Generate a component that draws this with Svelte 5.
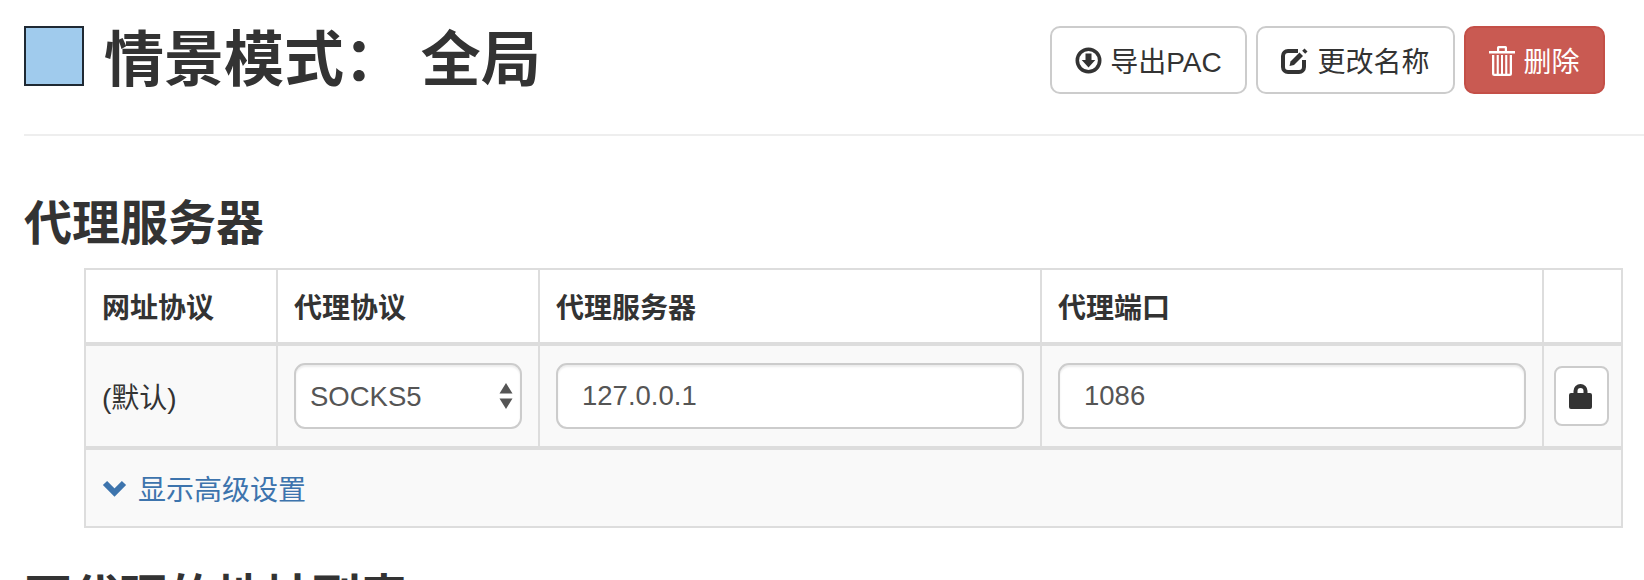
<script lang="ts">
  let protocol = 'SOCKS5';
  let host = '127.0.0.1';
  let port = '1086';
</script>

<div class="page">
  <header class="page-header">
    <span class="swatch"></span>
    <h1>情景模式： 全局</h1>
    <div class="actions">
      <button class="btn btn-export">
        <svg width="27" height="27" viewBox="0 0 27 27" aria-hidden="true">
          <circle cx="13.5" cy="13.5" r="11.2" fill="none" stroke="currentColor" stroke-width="3.6"/>
          <path d="M10.5 6.5h6v6.5h3.8l-6.800 7.500-6.800-7.500h3.800z" fill="currentColor"/>
        </svg>
        导出PAC
      </button>
      <button class="btn btn-rename">
        <svg width="28" height="27" viewBox="0 0 28 27" aria-hidden="true">
          <path d="M17 4H7a5 5 0 0 0-5 5v11a5 5 0 0 0 5 5h11a5 5 0 0 0 5-5v-7" fill="none" stroke="currentColor" stroke-width="4"/>
          <path d="M9.500 14.500l9-9 3.500 3.500-9 9-4.500 1z" fill="currentColor"/>
          <path d="M23.500 1.500l3 3-2.300 2.300-3-3z" fill="currentColor"/>
        </svg>
        更改名称
      </button>
      <button class="btn btn-delete">
        <svg width="26" height="31" viewBox="0 0 26 31" aria-hidden="true">
          <path d="M0 6h26v2.400H0zM8 6V2.500A1.500 1.500 0 0 1 9.500 1h7A1.500 1.500 0 0 1 18 2.500V6h-2.200V3.200H10.200V6z" fill="currentColor"/>
          <path d="M3 10h20v18.500a2.500 2.500 0 0 1-2.500 2.500h-15A2.500 2.500 0 0 1 3 28.500zM5.300 10v18.800h2.400V10zM9.800 10v18.800h2.200V10zM14 10v18.800h2.200V10zM18.300 10v18.800h2.400V10z" fill="currentColor" fill-rule="evenodd"/>
        </svg>
        删除
      </button>
    </div>
  </header>

  <h2>代理服务器</h2>

  <table class="servers">
    <colgroup>
      <col class="c-scheme" />
      <col class="c-protocol" />
      <col class="c-host" />
      <col class="c-port" />
      <col class="c-lock" />
    </colgroup>
    <thead>
      <tr>
        <th>网址协议</th>
        <th>代理协议</th>
        <th>代理服务器</th>
        <th>代理端口</th>
        <th></th>
      </tr>
    </thead>
    <tbody>
      <tr>
        <td>(默认)</td>
        <td>
          <div class="select-wrap">
            <select class="field" bind:value={protocol}>
              <option>SOCKS5</option>
            </select>
            <svg class="select-arrows" width="14" height="26" viewBox="0 0 14 26" aria-hidden="true">
              <path d="M7 0l6.500 10.500H.5zM7 26L.5 15.500h13z" fill="#555"/>
            </svg>
          </div>
        </td>
        <td><input class="field" type="text" bind:value={host} /></td>
        <td><input class="field" type="text" bind:value={port} /></td>
        <td class="lock-cell">
          <button class="btn-lock" aria-label="锁定">
            <svg width="23" height="25" viewBox="0 0 23 25" aria-hidden="true">
              <path d="M4.500 9V7a7 7 0 0 1 14 0v2H21a2 2 0 0 1 2 2v12a2 2 0 0 1-2 2H2a2 2 0 0 1-2-2V11a2 2 0 0 1 2-2zM8.500 9h6V7a3 3 0 0 0-6 0z" fill="#333" fill-rule="evenodd"/>
            </svg>
          </button>
        </td>
      </tr>
    </tbody>
    <tfoot>
      <tr>
        <td colspan="5">
          <a class="advanced" href="#advanced">
            <svg width="25" height="18" viewBox="0 0 25 18" aria-hidden="true">
              <path d="M3 4l9.500 9.500L22 4" fill="none" stroke="currentColor" stroke-width="6"/>
            </svg>
            显示高级设置
          </a>
        </td>
      </tr>
    </tfoot>
  </table>

  <h2 class="next">不代理的地址列表</h2>
</div>

<style>
  :global(body) {
    margin: 0;
    background: #fff;
    overflow: hidden;
  }

  .page {
    height: 580px;
    overflow: hidden;
    padding-left: 24px;
    font-family: "Liberation Sans", "Noto Sans CJK SC", sans-serif;
    font-size: 28px;
    color: #333;
  }

  .page-header {
    display: flex;
    align-items: flex-start;
    height: 136px;
    padding-top: 26px;
    box-sizing: border-box;
    border-bottom: 2px solid #eee;
  }

  .swatch {
    width: 56px;
    height: 56px;
    flex: none;
    background: #a0cbed;
    border: 2px solid #1f2933;
    margin-right: 20px;
  }

  h1 {
    flex: 1;
    margin: 0;
    font-size: 60px;
    font-weight: 600;
    line-height: 70px;
  }

  .actions {
    display: flex;
    gap: 9px;
    margin-right: 39px;
  }

  .btn {
    display: flex;
    align-items: center;
    justify-content: center;
    gap: 8px;
    height: 68px;
    padding: 0;
    font: inherit;
    color: #333;
    background: #fff;
    border: 2px solid #ccc;
    border-radius: 10px;
    white-space: nowrap;
  }

  .btn-export {
    width: 197px;
  }

  .btn-rename {
    width: 199px;
  }

  .btn-delete {
    width: 141px;
    color: #fff;
    background: #c95a52;
    border-color: #c44f47;
  }

  h2 {
    margin: 0;
    font-size: 48px;
    font-weight: 600;
    line-height: 56px;
  }

  .page-header + h2 {
    margin-top: 60px;
    margin-bottom: 16px;
  }

  .next {
    margin-top: 42px;
  }

  .servers {
    width: 1537px;
    margin-left: 60px;
    table-layout: fixed;
    border-collapse: collapse;
  }

  .c-scheme { width: 192px; }
  .c-protocol { width: 262px; }
  .c-host { width: 502px; }
  .c-port { width: 502px; }
  .c-lock { width: 79px; }

  th,
  td {
    border: 2px solid #ddd;
    padding: 0 16px;
    text-align: left;
    box-sizing: border-box;
  }

  th {
    height: 75px;
    font-weight: 700;
    border-bottom-width: 4px;
  }

  tbody td {
    height: 104px;
    background: #f9f9f9;
    border-bottom-width: 4px;
  }

  tfoot td {
    height: 79px;
    background: #f9f9f9;
  }

  .select-wrap {
    position: relative;
  }

  .field {
    display: block;
    width: 100%;
    height: 66px;
    box-sizing: border-box;
    padding: 0 14px;
    font: inherit;
    font-size: 27.5px;
    color: #555;
    background: #fff;
    border: 2px solid #ccc;
    border-radius: 11px;
    box-shadow: inset 0 2px 2px rgba(0, 0, 0, 0.075);
    appearance: none;
  }

  input.field {
    padding: 0 24px;
  }

  .select-arrows {
    position: absolute;
    right: 9px;
    top: 20px;
    pointer-events: none;
  }

  .lock-cell {
    padding: 0 10px;
  }

  .btn-lock {
    display: flex;
    align-items: center;
    justify-content: center;
    width: 55px;
    height: 60px;
    padding: 0 3px 0 0;
    background: #fff;
    border: 2px solid #ccc;
    border-radius: 8px;
  }

  .advanced {
    display: inline-flex;
    align-items: center;
    gap: 11px;
    color: #3d74ad;
    text-decoration: none;
  }
</style>
